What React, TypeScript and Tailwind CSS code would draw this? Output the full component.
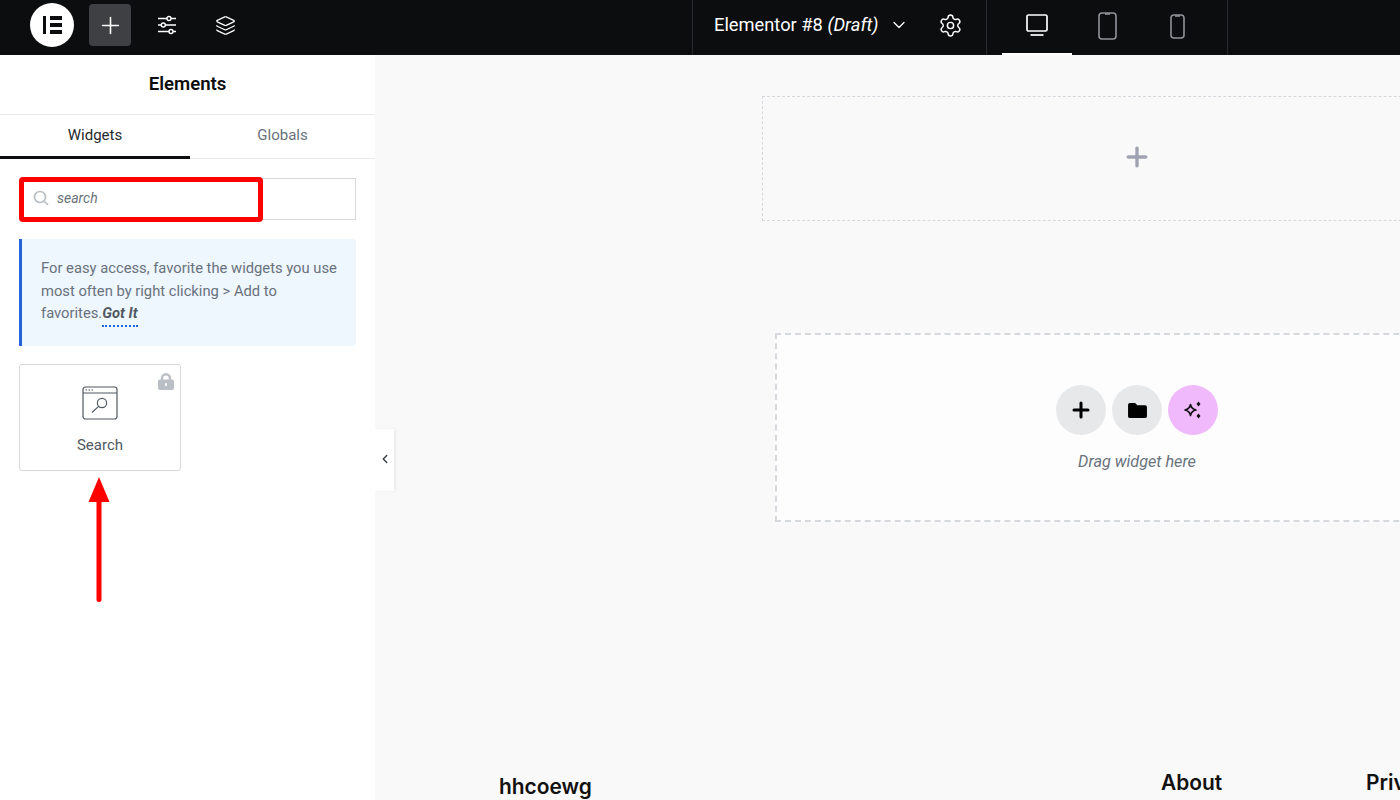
import React from "react";
import { Layers, Settings, ChevronDown, ChevronLeft, Plus } from "lucide-react";

function Sliders() {
  return (
    <svg width="20" height="20" viewBox="0 0 20 20" fill="none" stroke="currentColor" strokeWidth="1.4">
      <path d="M1 3.5h9M14 3.5h5M1 10h3.5M8 10h11M1 16.5h11M16 16.5h3" />
      <circle cx="12" cy="3.5" r="2" />
      <circle cx="6.3" cy="10" r="2" />
      <circle cx="14" cy="16.5" r="2" />
    </svg>
  );
}

function Monitor() {
  return (
    <svg width="24" height="24" viewBox="0 0 24 24" fill="none" stroke="currentColor" strokeWidth="1.7">
      <rect x="2" y="2" width="20" height="16" rx="1.5" />
      <path d="M5.5 22h13" />
    </svg>
  );
}

function Device({ w, h }: { w: number; h: number }) {
  return (
    <svg width={w + 2} height={h + 2} viewBox={`0 0 ${w + 2} ${h + 2}`} fill="none" stroke="currentColor" strokeWidth="1.6">
      <rect x="1" y="1" width={w} height={h} rx="3" />
      <path d={`M${w / 2 - 1.5} 2h5`} />
    </svg>
  );
}

function SearchWidget() {
  return (
    <svg width="36" height="34" viewBox="0 0 36 34" fill="none" stroke="#515962" strokeWidth="1.2">
      <rect x="1" y="1" width="34" height="32" rx="2.5" />
      <path d="M1 7h34" />
      <path d="M3.5 4h1.5M6.5 4h1.5M9.5 4h1.5" />
      <circle cx="20" cy="17" r="4.6" />
      <path d="M16.6 20.4 10 26.5" />
    </svg>
  );
}

function Lock() {
  return (
    <svg width="16" height="17" viewBox="0 0 17 18" fill="#babfc5">
      <path d="M3 7V5.5a5.5 5.5 0 0 1 11 0V7h1a2 2 0 0 1 2 2v7a2 2 0 0 1-2 2H2a2 2 0 0 1-2-2V9a2 2 0 0 1 2-2h1Zm2.6 0h5.8V5.5a2.9 2.9 0 0 0-5.8 0V7Z" fillRule="evenodd" />
      <rect x="7.5" y="10.5" width="2" height="3.5" rx="1" fill="#ffffff" />
    </svg>
  );
}

function Folder() {
  return (
    <svg width="19" height="17" viewBox="0 0 20 18" fill="#000000">
      <path d="M2 1h5.5l2.3 2.4H18a2 2 0 0 1 2 2V15a2 2 0 0 1-2 2H2a2 2 0 0 1-2-2V3a2 2 0 0 1 2-2Z" />
    </svg>
  );
}

function Stars() {
  return (
    <svg width="20" height="20" viewBox="0 0 20 20">
      <path d="M7.5 4.5C8.2 8 9.5 9.3 13 10c-3.5.7-4.8 2-5.5 5.5C6.8 12 5.500 10.700 2 10c3.500-.7 4.800-2 5.500-5.500Z" fill="none" stroke="#111111" strokeWidth="1.6" strokeLinejoin="round" />
      <path d="M15.500 1.500 17.500 4 15.500 6.500 13.500 4Z" fill="#111111" />
      <path d="M15.500 13.500 17.500 16 15.500 18.500 13.500 16Z" fill="#111111" />
    </svg>
  );
}

function Arrow() {
  return (
    <svg width="24" height="128" viewBox="0 0 24 128" className="absolute top-[476px] left-[88px]">
      <path d="M11 1 21.500 26H0.500Z" fill="#ff0000" />
      <path d="M11 24V123.500" stroke="#ff0000" strokeWidth="5" strokeLinecap="round" />
    </svg>
  );
}

export default function App() {
  return (
    <div className="relative flex h-[800px] w-[1400px] flex-col overflow-hidden bg-white font-['Roboto',sans-serif]">
      <header className="flex h-[55px] shrink-0 items-stretch bg-[#0c0d0e] text-white">
        <div className="flex items-center pb-[5px]">
          <div className="ml-[30px] flex h-[44px] w-[44px] items-center justify-center gap-[4px] rounded-full bg-white">
            <div className="h-[18px] w-[3px] bg-[#0c0d0e]" />
            <div className="flex h-[18px] w-[12px] flex-col justify-between">
              <div className="h-[4px] bg-[#0c0d0e]" />
              <div className="h-[4px] bg-[#0c0d0e]" />
              <div className="h-[4px] bg-[#0c0d0e]" />
            </div>
          </div>
          <div className="ml-[15px] flex h-[42px] w-[42px] items-center justify-center rounded-[4px] bg-[#3f4044]">
            <Plus size={27} strokeWidth={1.4} />
          </div>
          <div className="ml-[26px] flex w-[20px] justify-center">
            <Sliders />
          </div>
          <div className="ml-[37px] flex w-[22px] justify-center">
            <Layers size={21} strokeWidth={1.4} />
          </div>
        </div>
        <div className="ml-[456px] flex w-[295px] items-center border-x border-[#2a2c2f] pb-[5px] pl-[21px]">
          <span className="text-[18.3px] leading-none whitespace-nowrap">
            Elementor #8 <em>(Draft)</em>
          </span>
          <ChevronDown size={20} strokeWidth={1.5} className="ml-[10px]" />
          <Settings size={25} strokeWidth={1.4} className="ml-[29px]" />
        </div>
        <div className="flex w-[241px] items-stretch border-r border-[#2a2c2f] pl-[15px]">
          <div className="flex w-[70px] items-center justify-center border-b-2 border-white pb-[3px]">
            <Monitor />
          </div>
          <div className="flex w-[70px] items-center justify-center pb-[3px] text-[#8f9398]">
            <Device w={17} h={26} />
          </div>
          <div className="flex w-[70px] items-center justify-center pb-[3px] text-[#8f9398]">
            <Device w={13} h={23} />
          </div>
        </div>
      </header>

      <div className="flex min-h-0 flex-1">
        <aside className="w-[375px] shrink-0 bg-white">
          <div className="flex h-[60px] items-center justify-center border-b border-[#e6e8ea] text-[18.6px] font-semibold text-[#0c0d0e]">
            Elements
          </div>
          <div className="flex h-[44px] border-b border-[#e6e8ea] text-[15px]">
            <div className="flex h-[44px] w-[190px] items-center justify-center border-b-[3px] border-[#0c0d0e] text-[#26292d]">
              Widgets
            </div>
            <div className="flex w-[185px] items-center justify-center pb-[3px] text-[#69727d]">Globals</div>
          </div>
          <div className="mx-[20px] mt-[19px] flex h-[42px] w-[336px] items-center border border-[#d5d8dc] pb-[2px] pl-[12px]">
            <svg width="16" height="16" viewBox="0 0 16 16" fill="none" stroke="#babfc5" strokeWidth="1.7">
              <circle cx="7" cy="7" r="5.5" />
              <path d="M11 11l4 4" />
            </svg>
            <span className="ml-[8px] text-[14px] text-[#69727d] italic">search</span>
          </div>
          <div className="mx-[19px] mt-[19px] h-[107px] w-[337px] rounded-r-[4px] border-l-[3px] border-[#2563d8] bg-[#eef6fe] pt-[18px] pl-[19px] text-[14.75px] leading-[22.5px] text-[#69727d]">
            For easy access, favorite the widgets you use
            <br />
            most often by right clicking &gt; Add to
            <br />
            favorites.
            <span className="border-b-2 border-dotted border-[#2563d8] pb-[3px] font-bold text-[#515962] italic">Got It</span>
          </div>
          <div className="relative mx-[19px] mt-[18px] flex h-[107px] w-[162px] flex-col items-center rounded-[3px] border border-[#d5d8dc] pt-[21px]">
            <SearchWidget />
            <span className="mt-[15px] text-[15px] leading-[20px] text-[#515962]">Search</span>
            <div className="absolute top-[8px] right-[6px]">
              <Lock />
            </div>
          </div>
        </aside>

        <main className="flex min-w-0 flex-1 flex-col overflow-hidden bg-[#f9f9f9]">
          <div className="mt-[41px] ml-[387px] flex h-[125px] w-[750px] shrink-0 items-center justify-center border border-dashed border-[#d5d8dc] pb-[4px]">
            <Plus size={30} strokeWidth={2.7} className="text-[#a0a2b2]" />
          </div>
          <div className="mt-[112px] ml-[400px] flex h-[189px] w-[724px] shrink-0 flex-col items-center border-2 border-dashed border-[#d5d8dc] bg-[#fdfdfd] pt-[50px]">
            <div className="flex gap-[6px]">
              <div className="flex h-[50px] w-[50px] items-center justify-center rounded-full bg-[#e6e8ea] text-black">
                <Plus size={24} strokeWidth={3} />
              </div>
              <div className="flex h-[50px] w-[50px] items-center justify-center rounded-full bg-[#e6e8ea]">
                <Folder />
              </div>
              <div className="flex h-[50px] w-[50px] items-center justify-center rounded-full bg-[#f0b9fb]">
                <Stars />
              </div>
            </div>
            <em className="mt-[17px] text-[16.2px] leading-[20px] text-[#69727d]">Drag widget here</em>
          </div>
          <div className="mt-[247px] ml-[124px] flex shrink-0 items-start font-['Inter',sans-serif] font-semibold whitespace-nowrap text-[#111]">
            <span className="mt-[4px] w-[662px] shrink-0 text-[20.9px] leading-[28px]">hhcoewg</span>
            <span className="w-[205px] shrink-0 text-[20.9px] leading-[28px]">About</span>
            <span className="shrink-0 text-[20.9px] leading-[28px]">Privacy</span>
          </div>
        </main>
      </div>

      <div className="absolute top-[429px] left-[375px] flex h-[62px] w-[19px] items-center justify-center bg-white pb-[2px] shadow-[2px_0_3px_rgba(0,0,0,0.06)]">
        <ChevronLeft size={14} strokeWidth={2.2} className="text-[#33373d]" />
      </div>
      <div className="absolute top-[177px] left-[19px] h-[45px] w-[244px] rounded-[4px] border-[5px] border-[#ff0000]" />
      <Arrow />
    </div>
  );
}
